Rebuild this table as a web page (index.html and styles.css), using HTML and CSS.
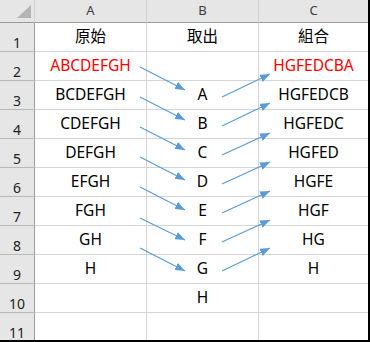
FILE: index.html
```html
<!DOCTYPE html>
<html lang="zh-Hant">
<head>
<meta charset="utf-8">
<title>Sheet</title>
<link rel="stylesheet" href="styles.css">
</head>
<body>
<div class="sheet">
  <div class="grid">
    <div class="corner"><span class="tri"></span></div>
    <div class="colhead">A</div>
    <div class="colhead">B</div>
    <div class="colhead last">C</div>

    <div class="rowhead">1</div>
    <div class="cell">原始</div>
    <div class="cell">取出</div>
    <div class="cell last">組合</div>

    <div class="rowhead">2</div>
    <div class="cell red">ABCDEFGH</div>
    <div class="cell"></div>
    <div class="cell last red">HGFEDCBA</div>

    <div class="rowhead">3</div>
    <div class="cell">BCDEFGH</div>
    <div class="cell">A</div>
    <div class="cell last">HGFEDCB</div>

    <div class="rowhead">4</div>
    <div class="cell">CDEFGH</div>
    <div class="cell">B</div>
    <div class="cell last">HGFEDC</div>

    <div class="rowhead">5</div>
    <div class="cell">DEFGH</div>
    <div class="cell">C</div>
    <div class="cell last">HGFED</div>

    <div class="rowhead">6</div>
    <div class="cell">EFGH</div>
    <div class="cell">D</div>
    <div class="cell last">HGFE</div>

    <div class="rowhead">7</div>
    <div class="cell">FGH</div>
    <div class="cell">E</div>
    <div class="cell last">HGF</div>

    <div class="rowhead">8</div>
    <div class="cell">GH</div>
    <div class="cell">F</div>
    <div class="cell last">HG</div>

    <div class="rowhead">9</div>
    <div class="cell">H</div>
    <div class="cell">G</div>
    <div class="cell last">H</div>

    <div class="rowhead">10</div>
    <div class="cell"></div>
    <div class="cell">H</div>
    <div class="cell last"></div>

    <div class="rowhead final">11</div>
    <div class="cell final"></div>
    <div class="cell final"></div>
    <div class="cell last final"></div>
  </div>

  <svg class="arrows" width="370" height="342" viewBox="0 0 370 342" aria-hidden="true">
    <defs>
      <marker id="head" markerUnits="userSpaceOnUse" markerWidth="10" markerHeight="8" viewBox="0 0 10 8" refX="10" refY="4" orient="auto">
        <path d="M0,0 L10,4 L0,8 z" fill="#5b9bd5"/>
      </marker>
    </defs>
    <g stroke="#5b9bd5" stroke-width="1.2" fill="none" marker-end="url(#head)">
      <line x1="140" y1="67" x2="185" y2="90"/>
      <line x1="140" y1="97" x2="185" y2="120"/>
      <line x1="140" y1="127" x2="185" y2="150"/>
      <line x1="140" y1="157" x2="185" y2="180"/>
      <line x1="140" y1="187" x2="185" y2="210"/>
      <line x1="140" y1="218" x2="185" y2="240"/>
      <line x1="140" y1="248" x2="185" y2="271"/>

      <line x1="222" y1="97" x2="270" y2="74"/>
      <line x1="222" y1="126" x2="270" y2="103"/>
      <line x1="222" y1="155" x2="270" y2="133"/>
      <line x1="222" y1="184" x2="270" y2="162"/>
      <line x1="222" y1="213" x2="270" y2="191"/>
      <line x1="222" y1="242" x2="270" y2="220"/>
      <line x1="222" y1="271" x2="270" y2="248"/>
    </g>
  </svg>
</div>
</body>
</html>
```

FILE: styles.css
```css
html, body {
  margin: 0;
  padding: 0;
  background: #ffffff;
}

.sheet {
  position: relative;
  width: 370px;
  height: 342px;
  box-sizing: border-box;
  border-right: 2px solid #000000;
  border-bottom: 2px solid #000000;
  overflow: hidden;
  font-family: "Noto Sans", "Noto Sans CJK TC", sans-serif;
}

.grid {
  display: grid;
  grid-template-columns: 35px 112px 112px 109px;
  grid-template-rows: 23px repeat(10, 29px) 27px;
}

.corner {
  position: relative;
  background: #e6e6e6;
  border-right: 1px solid #d2d2d2;
  border-bottom: 1px solid #9b9b9b;
}

.tri {
  position: absolute;
  left: 17px;
  top: 5px;
  width: 14px;
  height: 13px;
  background: #b4b4b4;
  clip-path: polygon(100% 0, 100% 100%, 0 100%);
}

.colhead {
  display: flex;
  align-items: center;
  justify-content: center;
  padding-bottom: 2px;
  background: #e6e6e6;
  border-right: 1px solid #d2d2d2;
  border-bottom: 1px solid #9b9b9b;
  font-size: 13px;
  color: #404040;
}

.rowhead {
  display: flex;
  align-items: center;
  justify-content: center;
  padding-top: 11px;
  box-sizing: border-box;
  background: #e6e6e6;
  border-right: 1px solid #9b9b9b;
  border-bottom: 1px solid #b8b8b8;
  font-size: 14px;
  color: #222222;
}

.cell {
  display: flex;
  align-items: center;
  justify-content: center;
  border-right: 1px solid #d4d4d4;
  border-bottom: 1px solid #d4d4d4;
  font-size: 15.5px;
  line-height: 1;
  color: #000000;
  white-space: nowrap;
}

.last {
  border-right: none;
}

.final {
  border-bottom: none;
}

.red {
  color: #ff0000;
}

.arrows {
  position: absolute;
  left: 0;
  top: 0;
  pointer-events: none;
}
```
